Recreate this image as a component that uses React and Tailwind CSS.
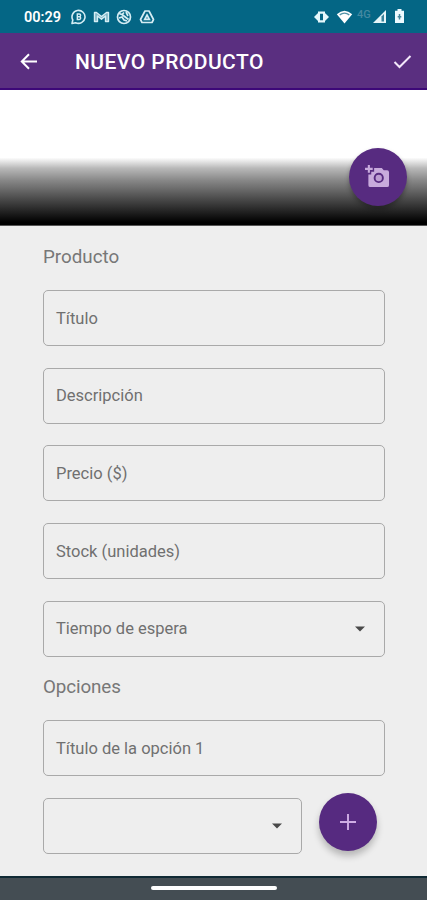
import React from "react";

function StatusBar() {
  return (
    <div className="flex h-[33px] shrink-0 items-center bg-[#046685] pl-[24px] pr-[22px] text-white">
      <span className="w-[47px] whitespace-nowrap pt-[3px] text-[14.5px] font-semibold leading-none">00:29</span>
      <svg width="16" height="16" viewBox="0 0 16 16" fill="none" stroke="#d5edf4" strokeWidth="1.6">
        <path d="M1 14.500l.8-3.500A6.500 6.500 0 1 1 4.600 13.700z" strokeLinejoin="round" />
        <path d="M6.300 5v5.500h2a1.400 1.400 0 0 0 0-2.800H6.300h2a1.300 1.300 0 0 0 0-2.700z" strokeWidth="1.4" />
      </svg>
      <svg className="ml-[6px]" width="17" height="14" viewBox="0 0 17 14" fill="none" stroke="#d5edf4" strokeWidth="1.4">
        <path d="M1.500 2.500v9h3V6l4 3.300 4-3.300v5.500h3v-9h-2l-5 4-5-4z" fill="#80b5c6" strokeLinejoin="round" />
      </svg>
      <svg className="ml-[6px]" width="16" height="16" viewBox="0 0 16 16" fill="none" stroke="#d5edf4" strokeWidth="1.700">
        <circle cx="8" cy="8" r="6.500" />
        <path d="M3 4.500l3 1 2-2M3 9l3-1 2 3 3 1M6 5.500l6.500 5M10 3l2 4" />
      </svg>
      <svg className="ml-[7px]" width="16" height="16" viewBox="0 0 16 16" fill="none" stroke="#d5edf4" strokeWidth="1.700">
        <path d="M6 2h4l4.500 8.500-1.500 3H3l-1.500-3z" strokeLinejoin="round" />
        <path d="M8 6l2.300 4.300H5.700z" />
      </svg>
      <div className="ml-auto flex items-center">
        <svg width="15" height="14" viewBox="0 0 15 14" fill="#e5f8fc">
          <path fillRule="evenodd" d="M4 1.500h7v11H4zM6 3.800v6.400h3V3.800zM4 3v8L0 7zM11 3v8l4-4z" />
        </svg>
        <svg className="ml-[7px]" width="17" height="14" viewBox="0 0 17 14">
          <path d="M.8 4.300Q8.500-2.800 16.200 4.300L8.500 13.500z" fill="#fff" />
          <path d="M3.700 4.800Q8.500 1.500 13.300 4.800" fill="none" stroke="#5293a8" strokeWidth="1.400" />
        </svg>
        <span className="ml-[4px] w-[15px] pb-[4px] text-[11px] font-medium leading-none text-[#4489a1]">4G</span>
        <svg width="15" height="15" viewBox="0 0 15 15">
          <path d="M14 1v13H1z" fill="#e6f5f8" />
          <path d="M12 5v7.500H9.500V7.500z" fill="#37829a" />
        </svg>
        <svg className="ml-[7px]" width="11" height="15" viewBox="0 0 11 15">
          <path d="M3.500 0h4v1.800H10V14H1V1.800h2.500z" fill="#edfaff" />
          <path d="M5.500 5v5.500M3.700 7.700h3.600" stroke="#46869b" strokeWidth="1.500" />
        </svg>
      </div>
    </div>
  );
}

function AppBar() {
  return (
    <header className="flex h-[57px] shrink-0 items-center border-b-2 border-[#3d0878] bg-[#5a2f80] pl-[20px] pr-[15px] pt-[2px] text-white">
      <svg width="18" height="18" viewBox="0 0 18 18" fill="none" stroke="white" strokeWidth="2">
        <path d="M17 8.500H2M9 1.300L1.800 8.500 9 15.700" />
      </svg>
      <h1 className="ml-[37px] whitespace-nowrap pt-[3px] text-[21px] font-medium tracking-[0.450px]">NUEVO PRODUCTO</h1>
      <svg className="ml-auto" width="19" height="16" viewBox="0 0 19 16" fill="none" stroke="#f3e8fa" strokeWidth="2">
        <path d="M1.500 8l5 5L17.500 2" />
      </svg>
    </header>
  );
}

function Caret() {
  return (
    <svg width="10" height="6" viewBox="0 0 10 6">
      <path d="M0 .5h10L5 5.500z" fill="#494949" />
    </svg>
  );
}

function Field({ label, select = false, className = "w-full" }) {
  return (
    <div className={`flex h-[56px] shrink-0 items-center justify-between rounded-[5px] border border-[#a9a9a9] pl-[12px] pr-[19px] text-[16.500px] text-[#707070] ${className}`}>
      <span className="whitespace-nowrap pt-[2px]">{label}</span>
      {select && <Caret />}
    </div>
  );
}

export default function App() {
  return (
    <div className="flex h-[900px] w-[427px] flex-col overflow-hidden bg-[#eeeeee] font-['Roboto',sans-serif]">
      <StatusBar />
      <AppBar />
      <section className="flex h-[136px] shrink-0 items-start justify-end border-b border-[#555] bg-[linear-gradient(to_bottom,#fff_50%,#e5e5e5_53%,#b8b8b8_58%,#878787_67%,#494949_81%,#111_94%,#000_98%)] pr-[20.500px] pt-[58px]">
        <button className="flex size-[58px] items-center justify-center rounded-full bg-[#572b80] shadow-[0_3px_5px_rgba(0,0,0,0.3)]">
          <svg width="25" height="24" viewBox="0 0 26 25">
            <path d="M4 0v8M0 4h8" stroke="#c8abdc" strokeWidth="2.200" />
            <path fill="#c8abdc" d="M9.500 3h8l2 2.500H23a2 2 0 0 1 2 2V21a2 2 0 0 1-2 2H5.500a2 2 0 0 1-2-2V10h3V7h3z" />
            <circle cx="14.300" cy="13.500" r="4.300" fill="#bd9dd2" stroke="#572b80" strokeWidth="2" />
          </svg>
        </button>
      </section>
      <main className="flex h-[650px] shrink-0 flex-col pl-[43px] pr-[42px] pt-[19px]">
        <h2 className="h-[45px] shrink-0 text-[18.800px] leading-[25px] text-[#777777]">Producto</h2>
        <div className="flex flex-col gap-[21.700px]">
          <Field label="Título" />
          <Field label="Descripción" />
          <Field label="Precio ($)" />
          <Field label="Stock (unidades)" />
          <Field label="Tiempo de espera" select />
        </div>
        <h2 className="mt-[18.500px] h-[45px] shrink-0 text-[18.800px] leading-[25px] tracking-[-0.100px] text-[#777777]">Opciones</h2>
        <Field label="Título de la opción 1" />
        <div className="mt-[16.500px] flex items-start">
          <Field label="" select className="mt-[5px] w-[259px]" />
          <button className="ml-[16.500px] flex size-[58px] shrink-0 items-center justify-center rounded-full bg-[#562a80] shadow-[0_5px_7px_rgba(0,0,0,0.24)]">
            <svg width="16" height="16" viewBox="0 0 16 16" stroke="#cfaee5" strokeWidth="1.900">
              <path d="M8 0v16M0 8h16" />
            </svg>
          </button>
        </div>
      </main>
      <footer className="flex h-[24px] shrink-0 items-center justify-center border-t-2 border-[#102a34] bg-[#444d53]">
        <div className="mb-[2px] h-[4px] w-[126px] rounded-full bg-white" />
      </footer>
    </div>
  );
}
